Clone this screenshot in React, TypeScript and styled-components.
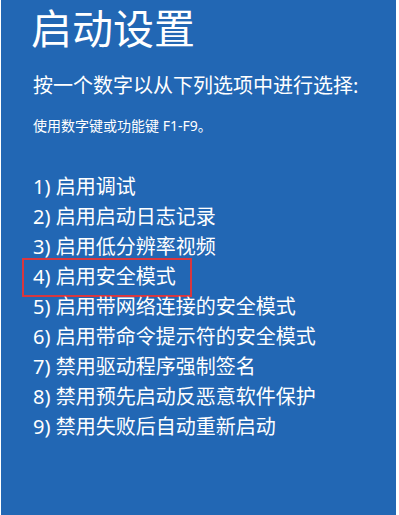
import styled, { createGlobalStyle } from "styled-components"

const GlobalStyle = createGlobalStyle`
    html, body {
        margin: 0;
        padding: 0;
        background: #ffffff;
    }
`

const options: Array<string> = [
    '启用调试',
    '启用启动日志记录',
    '启用低分辨率视频',
    '启用安全模式',
    '启用带网络连接的安全模式',
    '启用带命令提示符的安全模式',
    '禁用驱动程序强制签名',
    '禁用预先启动反恶意软件保护',
    '禁用失败后自动重新启动',
]

const App = () => {
    return (
        <>
            <GlobalStyle />
            <Screen>
                <Title>启动设置</Title>
                <Prompt>按一个数字以从下列选项中进行选择:</Prompt>
                <Hint>使用数字键或功能键 F1-F9。</Hint>
                <OptionList>
                    {options.map((val, ind) => (
                        <Option key={ind} $marked={ind === 3}>
                            {ind + 1}) {val}
                        </Option>
                    ))}
                </OptionList>
            </Screen>
        </>
    )
}

export default App

const Screen = styled.main`
    margin-left: 1px;
    width: 395px;
    height: 515px;
    background: #2267b4;
    color: #ffffff;
    font-family: "Noto Sans", "Noto Sans CJK SC", sans-serif;
    padding: 0 0 0 32px;
    box-sizing: border-box;
    display: flex;
    flex-direction: column;
    overflow: hidden;
`
const Title = styled.h1`
    margin: 3px 0 0 -2px;
    font-size: 41px;
    font-weight: 400;
    line-height: 50px;
    letter-spacing: 0;
`
const Prompt = styled.div`
    margin-top: 19px;
    font-size: 20px;
    line-height: 28px;
`
const Hint = styled.div`
    margin-top: 16px;
    font-size: 14px;
    line-height: 20px;
`
const OptionList = styled.ol`
    list-style: none;
    margin: 36px 0 0 0;
    padding: 0;
    display: flex;
    flex-direction: column;
`
const Option = styled.li<{ $marked?: boolean }>`
    font-size: 20px;
    line-height: 30px;
    position: relative;
    &::before {
        content: "";
        display: ${({ $marked }) => ($marked ? "block" : "none")};
        position: absolute;
        left: -11px;
        top: -4px;
        width: 170px;
        height: 39px;
        border: 2px solid #d8373f;
        box-sizing: border-box;
    }
`
